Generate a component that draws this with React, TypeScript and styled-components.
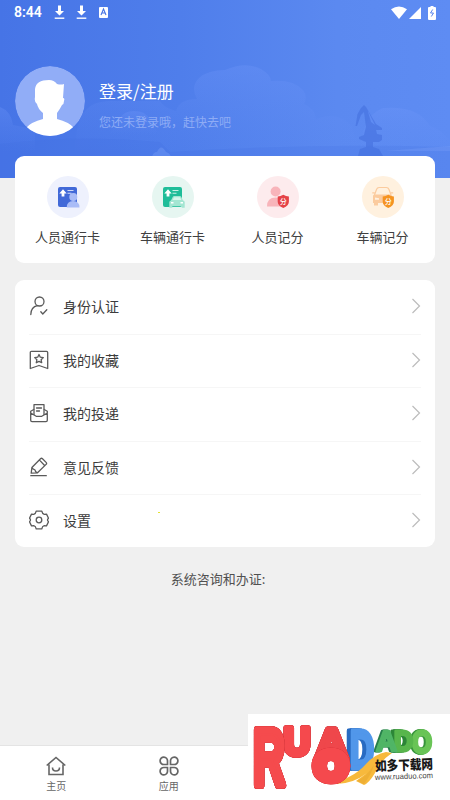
import React from "react";
import styled, { createGlobalStyle } from "styled-components";

const GlobalStyle = createGlobalStyle`
  * { box-sizing: border-box; }
  body { margin: 0; background: #f0f0f0; font-family: "Noto Sans CJK SC", sans-serif; }
`;

const Page = styled.div`
  position: relative;
  width: 450px;
  height: 800px;
  display: flex;
  flex-direction: column;
  overflow: hidden;
  background: #f0f0f0;
`;
const Header = styled.header`
  position: relative;
  flex: none;
  height: 178px;
  background: linear-gradient(90deg, #4674e6 0%, #4f7eeb 40%, #5b89f0 75%, #5e8cf3 100%);
`;
const Scenery = styled.svg`
  position: absolute;
  inset: 0;
`;
const StatusBar = styled.div`
  position: relative;
  display: flex;
  align-items: center;
  height: 25px;
  padding: 0 14px 0 14px;
  color: #fff;
`;
const Clock = styled.span`
  width: 40px;
  font: 600 14px/25px Roboto, sans-serif;
  letter-spacing: 0;
`;
const StatusSvg = styled.svg<{ $gap?: number }>`
  display: block;
  flex: none;
  margin-right: ${(p) => p.$gap ?? 0}px;
`;
const Spacer = styled.div`
  flex: 1;
`;
const Profile = styled.div`
  position: relative;
  display: flex;
  gap: 14px;
  padding: 41px 15px 0;
`;
const ProfileText = styled.div`
  padding-top: 12px;
`;
const Name = styled.div`
  color: #fff;
  font-size: 17px;
  line-height: 25px;
`;
const Hint = styled.div`
  margin-top: 9px;
  color: #8eacf5;
  font-size: 12px;
  line-height: 20px;
`;
const Card = styled.section`
  position: relative;
  flex: none;
  margin: 0 15px;
  border-radius: 9px;
  background: #fff;
`;
const Shortcuts = styled(Card)`
  display: grid;
  grid-template-columns: repeat(4, 1fr);
  height: 107px;
  margin-top: -22px;
`;
const Shortcut = styled.div`
  display: flex;
  flex-direction: column;
  align-items: center;
  padding-top: 20px;
  color: #404040;
  font-size: 13px;
  line-height: 20px;
`;
const Badge = styled.svg`
  display: block;
  margin-bottom: 9px;
`;
const Menu = styled(Card)`
  height: 267px;
  margin-top: 17px;
  padding: 0 14px;
`;
const MenuRow = styled.div`
  display: flex;
  align-items: center;
  height: 53.5px;
  padding-bottom: 1px;
  color: #3c3c3c;
  font-size: 14px;
  line-height: 20px;
  box-shadow: 0 1px 0 #f6f6f6;
  &:nth-child(5) { box-shadow: none; }
`;
const MenuIcon = styled.svg`
  width: 20px;
  height: 20px;
  margin-right: 14px;
  fill: none;
  stroke: #5a5a5a;
  stroke-width: 1.3;
  stroke-linejoin: round;
  stroke-linecap: round;
`;
const Contact = styled.div`
  margin-top: 22px;
  padding-right: 14px;
  text-align: center;
  color: #505050;
  font-size: 13px;
  line-height: 20px;
`;
const TabBar = styled.nav`
  display: flex;
  height: 55px;
  margin-top: auto;
  border-top: 1px solid #e4e4e4;
  background: #fff;
`;
const Tab = styled.div`
  display: flex;
  flex-direction: column;
  align-items: center;
  width: 112.5px;
  padding-top: 10px;
  color: #666;
  font-size: 10px;
  line-height: 15px;
  & svg { display: block; margin-bottom: 2px; }
`;
const Watermark = styled.div`
  position: absolute;
  right: 0;
  bottom: 0;
  width: 202px;
  height: 86px;
  background: #fff;
`;
const Depth = styled.g<{ $side: string; $dx: number }>`
  filter: drop-shadow(${(p) => p.$dx}px 0.3px 0 ${(p) => p.$side}) drop-shadow(${(p) => p.$dx}px 0.3px 0 ${(p) => p.$side});
`;
const Speck = styled.i`
  position: absolute;
  left: 143px;
  top: 232px;
  width: 1.5px;
  height: 1px;
  background: #e2e233;
`;

const Download = ({ gap }: { gap: number }) => (
  <StatusSvg $gap={gap} width="11" height="15" viewBox="0 0 11 15">
    <path d="M4 .5h3v5.500h3L5.500 10.500 1 6h3z" fill="#fff" />
    <path d="M.7 13.200h9.600" stroke="#fff" strokeWidth="1.400" />
  </StatusSvg>
);

const PassCard = ({ color }: { color: string }) => (
  <>
    <rect x="11" y="11" width="19" height="20" rx="2" fill={color} />
    <path d="M14.600 20.500v-3h-2.300l3.700-4.200 3.700 4.200h-2.300v3z" fill="#fff" />
    <path d="M20.500 14.500h6M20.500 17.200h4" stroke="#fff" strokeWidth="1.100" opacity=".75" />
  </>
);

const ScoreShield = ({ color }: { color: string }) => (
  <>
    <path d="M26.300 18.800q2.700 1.700 5.600 1.800v5.200q0 3.700-5.600 6.200-5.600-2.500-5.600-6.200v-5.200q2.900-.1 5.600-1.800z" fill={color} />
    <text x="26.300" y="28" textAnchor="middle" fontSize="7" fontWeight="500" fill="#fff">分</text>
  </>
);

const shortcuts = [
  {
    label: "人员通行卡", bg: "#eef1fd",
    art: <><PassCard color="#4169d8" /><circle cx="26.300" cy="21" r="4" fill="#a9bcf7" /><path d="M19.800 31.500q0-6.500 6.200-6.500 6.500 0 6.500 6.500z" fill="#a9bcf7" /></>,
  },
  {
    label: "车辆通行卡", bg: "#e6f6f1",
    art: <><PassCard color="#1fbd99" /><path d="M17.300 31.700v-6l1.900-1.700 1.500-3q.5-1 1.500-1h5.600q1 0 1.500 1l1.500 3 1.900 1.700v6h-3v-1.500h-9.400v1.500z" fill="#a3e6d2" /><path d="M20.600 24l1.400-2.700h6l1.400 2.700z" fill="#d5f7ec" /><path d="M19 26.800h2.500M28.500 26.800H31" stroke="#fff" strokeWidth="1.400" /></>,
  },
  {
    label: "人员记分", bg: "#fdebed",
    art: <><circle cx="18.600" cy="15.500" r="5" fill="#f8b4ba" /><path d="M10 30.500q0-9 8.700-9 8.800 0 8.800 9z" fill="#f8b4ba" /><ScoreShield color="#e54248" /></>,
  },
  {
    label: "车辆记分", bg: "#fff1df",
    art: <><path d="M12.500 19l2-5.500q.7-2 2.600-2h7.300q1.900 0 2.600 2l2 5.500M10.300 16.800h2.300M28.900 16.800h2.300" fill="none" stroke="#fbcb9e" strokeWidth="1.200" /><path d="M11 20q0-1.500 1.500-1.500h16q1.500 0 1.500 1.500v7H16v2.500h-4V27h-1z" fill="#fbcb9e" /><path d="M13 21.500l4 .8v1.500h-4z" fill="#fff1df" /><ScoreShield color="#f59321" /></>,
  },
];

const menu = [
  { label: "身份认证", art: <><circle cx="10.500" cy="5.500" r="4.500" /><path d="M1.800 18.500q.2-7.500 6.600-8.800M11.800 15.700l2 2.300 4-4.300" /></> },
  { label: "我的收藏", art: <><path d="M2.500 1.300h15q1.200 0 1.200 1.200v16L10 15.500l-8.700 3v-16q0-1.200 1.200-1.200z" /><path d="M10 4.500l1.300 2.700 3 .4-2.200 2.100.6 3-2.700-1.400-2.700 1.400.6-3-2.200-2.100 3-.4z" /></> },
  { label: "我的投递", art: <><path d="M4.800 6.500L1.700 8.300v9q0 1.300 1.300 1.300h14q1.300 0 1.300-1.300v-9l-3.100-1.800M1.700 10l5.500 3.300h5.600l5.500-3.300" /><path d="M5 11.500V1.700h10v9.800M7.500 5h5M7.500 8h3" /></> },
  { label: "意见反馈", art: <><path d="M1.800 18.700h15.500M2.200 16.200l.7-5.700L11.500 1.800q1-1 2 0l3.600 3.600q1 1 0 2L8.500 15.800zM2.900 10.500q1 2 3 2.300.3 2.200 2.600 3M11 3.600l4.400 4.700" /></> },
  { label: "设置", art: <><path d="M7.200 1.200h5.600q.5 2.700 2.400 3.100l2.300-.2 2 4.200q-2 1.700 0 3.400l-2 4.200-2.300-.2q-1.900.4-2.400 3.100H7.200q-.5-2.700-2.400-3.100l-2.300.2-2-4.200q2-1.700 0-3.400l2-4.200 2.300.2q1.900-.4 2.400-3.100z" /><circle cx="10" cy="10" r="2.800" /></> },
];

type LetterProps = { ch: string; x: number; y: number; w: number; h: number; color: string; side: string; dx?: number; weight?: number };
const Letter = ({ ch, x, y, w, h, color, side, dx = 0.8, weight = 2 }: LetterProps) => (
  <Depth $side={side} $dx={dx}>
    <text transform={`translate(${x} ${y}) scale(${w / 7.2} ${h / 7})`} fontFamily="Liberation Sans, sans-serif"
      fontSize="10" fontWeight="700" fill={color} stroke={color} strokeWidth={weight} strokeLinejoin="round" vectorEffect="non-scaling-stroke">{ch}</text>
  </Depth>
);

export default function App() {
  return (
    <Page>
      <GlobalStyle />
      <Header>
        <Scenery width="450" height="178" viewBox="0 0 450 178">
          <defs>
            <linearGradient id="cloud" x1="0" y1="0" x2="0" y2="1">
              <stop offset="0" stopColor="#7198fa" stopOpacity=".3" />
              <stop offset="1" stopColor="#658ff6" stopOpacity="0" />
            </linearGradient>
          </defs>
          <path d="M0 107q11 4 13 18 12 2 22 5v23H0z" fill="url(#cloud)" />
          <path d="M75 153q0-32 11-43 6-8 22-9h52q4 7 16 10 3-12 21-12-7-12 2-21 9-8 26-8 20-9 36-1 10 6 10 12 22-2 32 9 5 7 1 14 11 4 12 15 21-8 35 6l10 28z" fill="url(#cloud)" />
          <path d="M120 118q4-7 14-7 12 0 15 8l10 16h-50z" fill="url(#cloud)" />
          <path d="M361 153q-1-36 22-45 35-3 47 18 11 3 20 15v12z" fill="url(#cloud)" />
          <path d="M0 144q80-10 160-2l10 10q140-9 280-5v31H0z" fill="#426fdf" opacity=".2" />
          <path d="M152 157q1-5 5-5 4-9 9 0 4 1 5 5z" fill="#7da2fa" opacity=".35" />
          <path d="M385 151l65-5v5z" fill="#7da2fa" opacity=".3" />
          <path d="M361 108l3-3 2 2 10 17 6 4v2h-6l1 4 5 1v5l-3 2h-6v5l6 2 4 7h-25l2-7 6-2v-5l-7-3v-2l5-2 2-8-2-15-3 3-4 11h-1.500l2-12z" fill="#416edc" opacity=".55" />
          <path d="M367.500 110l7.500 15-4-3z" fill="#5f8cf3" />
        </Scenery>
        <StatusBar>
          <Clock>8:44</Clock>
          <Download gap={11} /><Download gap={11} />
          <svg width="11" height="11" viewBox="0 0 11 11"><rect x="1" y="0" width="9" height="11" rx="1" fill="#fff" /><path d="M3 8l2.500-6L8 8M4 6h3" stroke="#4774e4" strokeWidth="1.100" fill="none" /></svg>
          <Spacer />
          <StatusSvg $gap={2} width="16" height="13" viewBox="0 0 16 13"><path d="M0 3.300q8-5.600 16 0L8 13z" fill="#fff" /></StatusSvg>
          <StatusSvg $gap={7} width="12" height="12" viewBox="0 0 12 12"><path d="M12 0v12H0z" fill="#fff" /></StatusSvg>
          <StatusSvg width="8" height="14" viewBox="0 0 8 14"><path d="M2.500 0h3v1H7q1 0 1 1v11q0 1-1 1H1q-1 0-1-1V2q0-1 1-1h1.500z" fill="#fff" /><path d="M4.700 3.500L2.500 7h3L3.300 10.500" stroke="#5885ed" fill="none" /></StatusSvg>
        </StatusBar>
        <Profile>
          <svg width="70" height="70" viewBox="0 0 70 70">
            <defs><clipPath id="avatar"><circle cx="35" cy="35" r="35" /></clipPath></defs>
            <g clipPath="url(#avatar)"><circle cx="35" cy="35" r="35" fill="#91adf7" />
              <path d="M11 62q5-6 17-9v-6q-5-4-6-9-3-2-2-7V23q1-9 14-9 5 0 8 4 4 1 7 0l-1 14q2 0 1 3 0 3-2 4-2 4-5 8v6q12 3 17 9v9H11z" fill="#fff" />
            </g>
          </svg>
          <ProfileText><Name>登录/注册</Name><Hint>您还未登录哦，赶快去吧</Hint></ProfileText>
        </Profile>
      </Header>
      <Shortcuts>
        {shortcuts.map((s) => (
          <Shortcut key={s.label}>
            <Badge width="42" height="42" viewBox="0 0 42 42"><circle cx="21" cy="21" r="21" fill={s.bg} />{s.art}</Badge>
            {s.label}
          </Shortcut>
        ))}
      </Shortcuts>
      <Menu>
        {menu.map((m) => (
          <MenuRow key={m.label}>
            <MenuIcon viewBox="0 0 20 20">{m.art}</MenuIcon>{m.label}<Spacer />
            <svg width="10" height="16" viewBox="0 0 10 16"><path d="M1.500 1L8.500 8l-7 7" fill="none" stroke="#bcbcbc" strokeWidth="1.200" /></svg>
          </MenuRow>
        ))}
        <Speck />
      </Menu>
      <Contact>系统咨询和办证:</Contact>
      <TabBar>
        <Tab><svg width="20" height="20" viewBox="0 0 20 20" fill="none" stroke="#666" strokeWidth="1.600"><path d="M.7 9.500L10 1.500l9.300 8M3 8.500v10h14v-10M6.500 11.500q0 3.500 3.500 3.500t3.500-3.500" /></svg>主页</Tab>
        <Tab><svg width="20" height="20" viewBox="0 0 20 20" fill="none" stroke="#666" strokeWidth="1.700"><path d="M8.500 8.500H5A3.700 3.700 0 1 1 8.500 5zM11.500 8.500V5a3.700 3.700 0 1 1 3.500 3.500zM8.500 11.500V15A3.700 3.700 0 1 1 5 11.500zM11.500 11.500H15a3.700 3.700 0 1 1-3.500 3.500z" /></svg>应用</Tab>
      </TabBar>
      <Watermark>
        <svg width="202" height="86" viewBox="248 714 202 86">
          <Letter ch="O" x={412} y={752.500} w={18.500} h={22} color="#69c456" side="#38933c" dx={-0.9} weight={3} />
          <Letter ch="D" x={394} y={751} w={19} h={21} color="#58b64c" side="#2c8637" dx={-1.100} weight={3} />
          <Letter ch="A" x={376} y={751} w={21} h={21} color="#50b566" side="#287e4c" dx={-0.9} weight={2.500} />
          <Letter ch="D" x={350} y={768} w={24} h={38} color="#5197ea" side="#286bc2" dx={-1.200} weight={4} />
          <path d="M327 783q25-3 39-19 9-10 20-12l6 1q-11 7-17 20-6 10-11 12l-8-4 11-8q-18 14-40 10z" fill="#f7b93c" />
          <path d="M357 781q10-5 17-16-3 10-10 19z" fill="#dc9926" opacity=".3" />
          <Letter ch="U" x={284} y={755} w={26} h={27} color="#f5494d" side="#c82f36" weight={5.500} />
          <Letter ch="A" x={315} y={758} w={33} h={29.500} color="#ef474b" side="#c82f36" dx={0.4} weight={5} />
          <Letter ch="O" x={314.500} y={779.500} w={30.500} h={28} color="#f5494d" side="#d7343a" dx={0.3} weight={9} />
          <Letter ch="R" x={253} y={785} w={32} h={56} color="#f54b4d" side="#c72d34" weight={6} />
          <g transform="rotate(-2 403 765)">
            <text x="375" y="770" fontSize="13.500" fontWeight="900" fill="#171717" textLength="58" lengthAdjust="spacingAndGlyphs">如多下载网</text>
            <text x="374.500" y="779" fontFamily="Liberation Sans, sans-serif" fontSize="8" fill="#444" textLength="58" lengthAdjust="spacingAndGlyphs">www.ruaduo.com</text>
          </g>
        </svg>
      </Watermark>
    </Page>
  );
}
